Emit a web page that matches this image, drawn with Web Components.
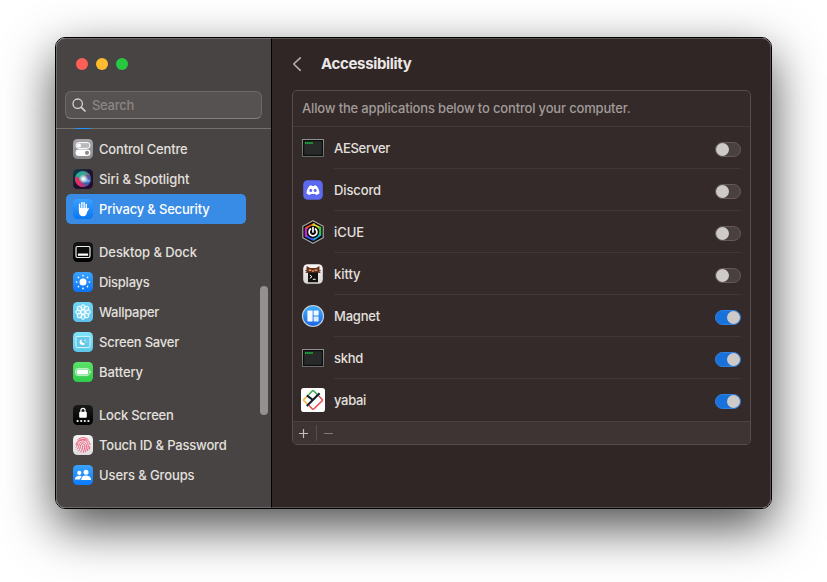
<!DOCTYPE html>
<html lang="en">
<head>
<meta charset="utf-8">
<title>Accessibility</title>
<style>
html,body{margin:0;height:100%;background:#fff;overflow:hidden}
body{font:500 13px/16px Inter,"Liberation Sans",sans-serif;color:#e3e0df;padding:37px 0 0 55px;box-sizing:border-box}
</style>
</head>
<body>
<settings-window>
  <settings-sidebar slot="sidebar">
    <side-group>
      <side-item icon="control" w="88.5">Control Centre</side-item>
      <side-item icon="siri" w="90.5">Siri &amp; Spotlight</side-item>
      <side-item icon="privacy" w="110.5" selected>Privacy &amp; Security</side-item>
    </side-group>
    <side-group>
      <side-item icon="dock" w="98">Desktop &amp; Dock</side-item>
      <side-item icon="displays" w="50.5">Displays</side-item>
      <side-item icon="wallpaper" w="60">Wallpaper</side-item>
      <side-item icon="saver" w="80">Screen Saver</side-item>
      <side-item icon="battery" w="44">Battery</side-item>
    </side-group>
    <side-group>
      <side-item icon="lock" w="74.5">Lock Screen</side-item>
      <side-item icon="touch" w="127.5">Touch ID &amp; Password</side-item>
      <side-item icon="users" w="95.5">Users &amp; Groups</side-item>
    </side-group>
  </settings-sidebar>
  <settings-pane>
    <app-row icon="exec" w="56">AEServer</app-row>
    <app-row icon="discord" w="47">Discord</app-row>
    <app-row icon="icue" w="30">iCUE</app-row>
    <app-row icon="kitty" w="26.5">kitty</app-row>
    <app-row icon="magnet" w="46" on>Magnet</app-row>
    <app-row icon="exec" w="29" on>skhd</app-row>
    <app-row icon="yabai" w="32" on>yabai</app-row>
  </settings-pane>
</settings-window>
<script>
const grad = (id, a, b) => `<linearGradient id="${id}" x1="0" y1="0" x2="0" y2="1"><stop stop-color="${a}"/><stop offset="1" stop-color="${b}"/></linearGradient>`;
const tile = (a, b, inner) => `<svg width="20" height="20" viewBox="0 0 20 20"><defs>${grad('g', a, b)}</defs><rect width="20" height="20" rx="4.6" fill="url(#g)"/>${inner}</svg>`;

const petals = Array.from({length: 8}, (_, i) => `<ellipse cx="10" cy="5.2" rx="2.1" ry="2.5" transform="rotate(${i * 45} 10 10)"/>`).join('');
const rays = Array.from({length: 8}, (_, i) => `<circle cx="10" cy="3.6" r=".85" transform="rotate(${i * 45} 10 10)"/>`).join('');

const ICONS = {
  control: tile('#a9a9ad', '#8b8b8f', `<rect x="3" y="3.6" width="14" height="5.8" rx="2.9" fill="#b9b9bc" stroke="#fff" stroke-width="1"/><circle cx="6" cy="6.5" r="2" fill="#fff"/><rect x="2.6" y="10.6" width="14.8" height="6.4" rx="3.2" fill="#fff"/><circle cx="14" cy="13.8" r="2.1" fill="#8d8d91"/>`),
  siri: `<svg width="20" height="20" viewBox="0 0 20 20"><defs>
    <linearGradient id="b" x1="0" y1="0" x2="1" y2="1"><stop stop-color="#123f4c"/><stop offset=".5" stop-color="#20122e"/><stop offset="1" stop-color="#280a2c"/></linearGradient>
    <linearGradient id="o" x1="0" y1=".1" x2="1" y2=".9"><stop stop-color="#12b79b"/><stop offset=".35" stop-color="#3f8f8c"/><stop offset=".5" stop-color="#8d4b75"/><stop offset=".75" stop-color="#3d62b0"/><stop offset="1" stop-color="#1d61c4"/></linearGradient>
    <radialGradient id="w"><stop stop-color="#fff"/><stop offset=".4" stop-color="#e4f2f6" stop-opacity=".85"/><stop offset="1" stop-color="#aadbea" stop-opacity="0"/></radialGradient></defs>
    <rect width="20" height="20" rx="4.6" fill="url(#b)"/><circle cx="10" cy="10" r="8" fill="url(#o)"/>
    <path d="M2.1 8.5C1.8 14 6 18.4 11.5 17.9C7.5 15.5 5.5 11.5 5.6 8Z" fill="#f0285f"/><path d="M3.6 6C7 1.6 13 1.5 16.8 6C12 5.2 8 6.5 6.5 9.5Z" fill="#2fae98" opacity=".75"/><path d="M8.5 9.5C11 8.5 15 9 17.6 12.5C14 14 10 13 8.5 9.5Z" fill="#7fb6e2" opacity=".8"/><path d="M7 11C9 15 12.5 16.5 15.5 15.5C13.5 17.5 9.5 18 7.5 15.8Z" fill="#b3367f" opacity=".8"/><circle cx="10.4" cy="9.8" r="4.8" fill="url(#w)"/></svg>`,
  privacy: tile('#3ba0ff', '#0877f2', `<g stroke="#fff" stroke-linecap="round" stroke-width="1.65" fill="none"><path d="M6.7 10.5V5.4M8.9 9.5V3.7M11.1 9.5V3.9M13.2 10.5V5.6"/><path d="M13.4 12.6L15.1 9.6"/></g><path d="M5.9 9H14V12.4C14 15.5 12.7 17.2 10.2 17.2C7.3 17.2 5.9 15.2 5.9 12.4Z" fill="#fff"/><path d="M7.8 5V9M10 4.5V8.8M12.15 5.3V9" stroke="#1984f7" stroke-width=".45"/>`),
  dock: tile('#151515', '#000', `<rect x="3" y="4.5" width="14" height="11" rx="1.4" fill="none" stroke="#ececec" stroke-width="1.2"/><rect x="4.9" y="11.4" width="10.2" height="2.4" rx=".4" fill="#fff"/>`),
  displays: tile('#3ba2ff', '#0a74f5', `<g fill="#fff"><circle cx="10" cy="10" r="3.5"/>${rays}</g>`),
  wallpaper: tile('#6ed7f7', '#5bbfea', `<g fill="#9ee5fa" fill-opacity=".45" stroke="#fff" stroke-width=".95">${petals}<circle cx="10" cy="10" r="2.1"/></g>`),
  saver: tile('#7de4fa', '#5cc7e8', `<rect x="3" y="4.4" width="14" height="11.2" rx="1" fill="#65c9ea" stroke="#d5f8ff" stroke-width="1"/><path d="M8.6 7.2A3 3 0 1 0 12.2 11.4A3.2 3.2 0 0 1 8.6 7.2Z" fill="#fff"/><circle cx="12" cy="8.2" r=".75" fill="#fff"/><circle cx="13.9" cy="9.9" r=".5" fill="#fff"/>`),
  battery: tile('#5be268', '#2fcb4c', `<rect x="2.6" y="6.4" width="13.6" height="7.2" rx="2.2" fill="none" stroke="#c9f6cf" stroke-width=".9"/><rect x="3.7" y="7.5" width="11.4" height="5" rx="1.3" fill="#fff"/><path d="M17.1 8.4C18.3 8.9 18.3 11.1 17.1 11.6Z" fill="#e2fbe5"/>`),
  lock: tile('#1a1a1a', '#000', `<path d="M7.9 7V5.5A2.1 2.1 0 0 1 12.1 5.5V7" fill="none" stroke="#fff" stroke-width="1.2"/><rect x="6.2" y="6.8" width="7.6" height="6" rx="1" fill="#fff"/><g fill="#fff"><circle cx="4.6" cy="16" r="1.1"/><circle cx="8.2" cy="16" r="1.1"/><circle cx="11.8" cy="16" r="1.1"/><circle cx="15.4" cy="16" r="1.1"/></g>`),
  touch: tile('#f5f4f4', '#dedcdc', `<g fill="none" stroke="#f0567a" stroke-width=".95" stroke-linecap="round"><path d="M4.7 4.8C7.7 1.8 12.4 1.8 15.3 4.8M3 9.8C3.2 3.1 15.8 1.8 17 9.5M3 12.2C4.8 11.4 4.2 8.6 5.3 7.3C8.2 3.4 14.6 4.6 15.2 10.3C15.3 12.2 15 14 14.6 15.5M4.2 14.2C6.2 12.6 5.6 10.4 6.4 8.8C8.2 5.6 13.2 6.6 13.4 10.7C13.5 13 13 14.9 12.3 16.8M5.6 15.9C7.4 14 7.3 11.8 7.7 10C8.4 7.8 11.6 8.3 11.7 11C11.7 13.2 11.2 15.3 10.2 17.3M7.6 17C9.2 15.2 9.7 12.9 9.7 10.7M16.8 11.5C16.9 12.6 16.7 13.3 16.5 14"/></g>`),
  users: tile('#3ba2ff', '#0a7bfb', `<g fill="#fff"><circle cx="6.3" cy="7.9" r="2.1"/><path d="M1.9 14.6C2 11.8 4 10.7 6.2 10.7C7.3 10.7 8.2 11 8.8 11.4C7.7 12.4 7.2 13.4 7.2 14.6Z"/><circle cx="13" cy="7.3" r="2.5"/><path d="M8.1 14.9C8.1 12.1 10.3 10.6 13 10.6S18 12.1 18.1 14.9Z"/></g>`),

  exec: `<svg width="24" height="24" viewBox="0 0 24 24"><defs>${grad('g', '#8e9496', '#67696b')}</defs><rect x="1" y="3" width="22" height="18" rx=".5" fill="url(#g)"/><rect x="2" y="4" width="20" height="16" fill="#0c0d0d"/><rect x="3.2" y="5.2" width="17.6" height="13.6" fill="#272a29"/><path d="M4 7H12" stroke="#1d9c38" stroke-width="1.8" stroke-dasharray="1.7 .35"/></svg>`,
  discord: `<svg width="24" height="24" viewBox="0 0 24 24"><rect x="2.2" y="2.2" width="19.6" height="19.6" rx="4.5" fill="#5d6af0"/><path d="M8.3 7.9C9.2 7.5 9.9 7.3 10.5 7.2L10.9 8H13.1L13.5 7.2C14.2 7.3 14.9 7.5 15.7 7.9C17.6 10.4 18.6 13 18.4 15.6C17.1 16.4 16.1 16.8 15 17L14.2 15.7C12.7 16.1 11.3 16.1 9.8 15.7L9 17C7.9 16.8 6.9 16.4 5.6 15.6C5.4 13 6.4 10.4 8.3 7.9Z" fill="#fff"/><ellipse cx="9.8" cy="12.4" rx="1.45" ry="1.6" fill="#5d6af0"/><ellipse cx="14.2" cy="12.4" rx="1.45" ry="1.6" fill="#5d6af0"/></svg>`,
  icue: `<svg width="24" height="24" viewBox="0 0 24 24"><path d="M12 .7L22.2 6.2V17.8L12 23.3L1.8 17.8V6.2Z" fill="#080808" stroke="#a9a9a9" stroke-width="1.2" stroke-linejoin="round"/><g fill="none" stroke-width="2.5"><path d="M14 4L4.6 8.4" stroke="#f0542a"/><path d="M11.5 4.4L19.6 8.4" stroke="#d9d829"/><path d="M19 6.8V15" stroke="#3ac84b"/><path d="M19.6 14.5L12 19.8" stroke="#18b4e0"/><path d="M4.4 15.6L13 19.8" stroke="#3558ee"/><path d="M5 8V16.8" stroke="#c52bd4"/></g><circle cx="12" cy="12" r="6.2" fill="#090909"/><path d="M9.5 9A3.9 3.9 0 1 0 14.5 9" fill="none" stroke="#fff" stroke-width="1.7" stroke-linecap="round"/><path d="M12 7.6V12" stroke="#fff" stroke-width="1.7" stroke-linecap="round"/></svg>`,
  kitty: `<svg width="24" height="24" viewBox="0 0 24 24"><defs>${grad('g', '#f7f6f4', '#d8d6d3')}</defs><rect x="2.2" y="2.2" width="19.6" height="19.6" rx="4.3" fill="url(#g)"/><path d="M5.6 4L9 5.9H15L18.4 4L18.6 9.6L17 11.2H7L5.4 9.6Z" fill="#6b2d20"/><path d="M4.2 8.6L8 9M19.8 8.6L16 9M4.6 10.6L8 10M19.4 10.6L16 10" stroke="#4d2f26" stroke-width=".9"/><path d="M7.6 7.4H10.4V9H7.6ZM13.6 7.4H16.4V9H13.6Z" fill="#dd9d4b"/><path d="M10.9 8.6H13.1L12 10.4Z" fill="#ecc9b6"/><rect x="7" y="10.6" width="10" height="9.6" rx=".5" fill="#141110"/><path d="M8.8 13L11 14.7L8.8 16.4M11.8 17.3H14.7" stroke="#f2f2f2" stroke-width="1" fill="none"/></svg>`,
  magnet: `<svg width="24" height="24" viewBox="0 0 24 24"><defs>${grad('g', '#40b0fb', '#1a66e4')}</defs><circle cx="12" cy="12" r="11.1" fill="#c8d1d9"/><circle cx="12" cy="12" r="10" fill="url(#g)"/><g fill="#f6faff"><rect x="6.4" y="6.6" width="5.2" height="10.8" rx=".4"/><rect x="12.6" y="6.6" width="5" height="4.9" rx=".4"/><rect x="12.6" y="12.5" width="5" height="4.9" rx=".4" fill="#dcecfd"/></g></svg>`,
  yabai: `<svg width="24" height="24" viewBox="0 0 24 24"><rect width="24" height="24" rx="2.8" fill="#fff"/><g fill="none" stroke-width="1.5" stroke-linejoin="round" stroke-linecap="round"><path d="M7.9 6.4L11.2 3Q12 2.3 12.8 3L16 6.2" stroke="#35a94b"/><path d="M5.8 8.5L2.9 11.4Q2.3 12 2.9 12.7L6 15.8" stroke="#f2b43a"/><path d="M18.2 8.3L21.2 11.4Q21.8 12 21.2 12.7L13 20.8Q12 21.7 11.2 20.8L8.1 17.8" stroke="#e9474b"/></g><path d="M18.6 5.2L5.8 18M5.8 7.4L12 12" stroke="#10202a" stroke-width="2.1" fill="none"/></svg>`
};

const define = (name, html, setup) => {
  const t = document.createElement('template');
  t.innerHTML = html;
  customElements.define(name, class extends HTMLElement {
    connectedCallback() {
      if (this.shadowRoot) return;
      this.attachShadow({mode: 'open'}).append(t.content.cloneNode(true));
      if (setup) setup(this, this.shadowRoot);
    }
  });
};

/* Text whose tracking is adjusted so that it takes up the given width. */
define('fit-text', `<style>:host{display:inline-block;white-space:nowrap}</style><span><slot></slot></span>`, (el, root) => {
  const s = root.querySelector('span'), w = parseFloat(el.getAttribute('w'));
  if (w) s.style.letterSpacing = (w - s.getBoundingClientRect().width) / el.textContent.trim().length + 'px';
});

define('glyph-icon', `<style>:host{display:block;flex:none}svg{display:block}</style>`, (el, root) => {
  root.append(document.createRange().createContextualFragment(ICONS[el.getAttribute('name')]));
});

const fill = (el, root) => {
  root.querySelector('glyph-icon').replaceWith(Object.assign(document.createElement('div'), {className: 'icon', innerHTML: `<glyph-icon name="${el.getAttribute('icon')}"></glyph-icon>`}));
  const label = document.createElement('fit-text');
  label.setAttribute('w', el.getAttribute('w'));
  label.textContent = el.textContent;
  root.querySelector('.label').append(label);
};

define('side-item', `<style>
:host{display:flex;align-items:center;height:30px;width:180px;box-sizing:border-box;padding-left:7px;gap:6px;border-radius:5px}
:host([selected]){background:#388ce6;color:#fff}
.label{height:16px}
</style><glyph-icon name="control"></glyph-icon><div class="label"></div>`, fill);

define('side-group', `<style>:host{display:block}</style><slot></slot>`);

define('traffic-lights', `<style>:host{display:flex;gap:8px}i{width:12px;height:12px;border-radius:50%}
i:nth-of-type(1){background:#ff5f57}i:nth-of-type(2){background:#febc2e}i:nth-of-type(3){background:#28c840}</style><i></i><i></i><i></i>`);

define('search-field', `<style>
:host{display:flex;align-items:center;gap:6px;box-sizing:border-box;width:197px;height:28px;padding-left:6px;border:1px solid #6c6968;border-bottom-color:#858281;border-radius:6px;background:#565251;color:#8a8685;font-weight:500}
svg{display:block}</style>
<svg width="14" height="14" viewBox="0 0 14 14" fill="none" stroke="#d5d2d1" stroke-linecap="round"><circle cx="5.7" cy="5.7" r="4.7" stroke-width="1.3"/><path d="M9.3 9.3L13 13" stroke-width="1.7"/></svg><fit-text w="42">Search</fit-text>`);

define('settings-sidebar', `<style>
:host{display:flex;flex-direction:column;box-sizing:border-box;width:216px;height:470px;background:#484443;border-right:1px solid #000}
traffic-lights{padding:20px 0 0 20px;height:33px;box-sizing:border-box;margin-bottom:20px}
search-field{margin-left:9px;margin-bottom:9px}
.list{flex:1;min-height:0;border-top:1px solid #72706f;display:grid;grid-template-columns:1fr 11px;position:relative}
.items{display:flex;flex-direction:column;gap:13px;padding:5px 0 0 10px}
.peek{position:absolute;left:19px;top:-1px;width:16px;height:1px;background:#2793f5}
.bar{width:8px;height:129px;border-radius:4px;background:#949090;margin-top:157px}
</style><traffic-lights></traffic-lights><search-field></search-field>
<div class="list"><div class="items"><slot></slot></div><div class="bar"></div><div class="peek"></div></div>`);

define('toggle-switch', `<style>
:host{display:flex;box-sizing:border-box;width:26px;height:15px;border-radius:8px;background:#4a403f;border:1px solid #655b5a;align-items:center}
i{width:13px;height:13px;border-radius:50%;background:#cdcac8}
:host([on]){background:#1971dc;border-color:#3283e0;justify-content:flex-end}
</style><i></i>`);

define('app-row', `<style>
:host{display:flex;height:42px;padding:0 9px 0 8px;box-sizing:border-box;gap:9px}
.icon{padding-top:9px}
.body{flex:1;display:flex;justify-content:space-between;box-sizing:border-box;border-bottom:1px solid #423736}
:host(:last-of-type) .body{border-color:transparent}
.label{padding-top:13px}
toggle-switch{margin-top:15px}
</style><glyph-icon name="exec"></glyph-icon><div class="body"><div class="label"></div><toggle-switch></toggle-switch></div>`, (el, root) => {
  fill(el, root);
  root.querySelector('toggle-switch').toggleAttribute('on', el.hasAttribute('on'));
});

define('settings-pane', `<style>
:host{display:block;flex:1;background:#302625}
header{display:flex;align-items:center;gap:19px;height:52px;padding-left:20px;font:700 15px/20px Inter,"Liberation Sans",sans-serif;color:#eae7e6}
header svg{display:block}
.box{margin-left:20px;width:459px;height:355px;box-sizing:border-box;border:1px solid #574d4c;border-radius:5px;background:#342a29;overflow:hidden;display:flex;flex-direction:column}
.note{flex:none;height:36px;box-sizing:border-box;border-bottom:1px solid #433938;padding:9px 0 0 9px;color:#a19b99;font-weight:500}
.rows{flex:none;height:294px}
footer{flex:none;height:23px;box-sizing:border-box;background:#3e3433;border-top:1px solid #4c4241}
footer svg{display:block}
</style>
<header><svg width="10" height="16" viewBox="0 0 10 16" fill="none" stroke="#b3aeac" stroke-width="1.6" stroke-linecap="round" stroke-linejoin="round"><path d="M8.3 1.8L1.7 8L8.3 14.3"/></svg><fit-text w="90.5">Accessibility</fit-text></header>
<div class="box"><div class="note"><fit-text w="328.5">Allow the applications below to control your computer.</fit-text></div>
<div class="rows"><slot></slot></div>
<footer><svg width="46" height="22" viewBox="0 0 46 22" fill="none"><path d="M6 11.5H15M10.5 7V16" stroke="#c3bdbb" stroke-width="1.2"/><path d="M23.5 3V19" stroke="#584e4d"/><path d="M31 11.5H40" stroke="#80787a" stroke-width="1.2"/></svg></footer></div>`);

define('settings-window', `<style>
:host{display:flex;position:relative;box-sizing:border-box;width:717px;height:472px;border:1px solid #000;border-radius:10px;overflow:hidden;box-shadow:0 18px 50px rgba(0,0,0,.7)}
.rim{position:absolute;inset:0;border-radius:9px;border:1px solid rgba(255,255,255,.2);pointer-events:none}
::slotted(settings-pane){height:470px}
</style><slot name="sidebar"></slot><slot></slot><div class="rim"></div>`);
</script>
</body>
</html>
